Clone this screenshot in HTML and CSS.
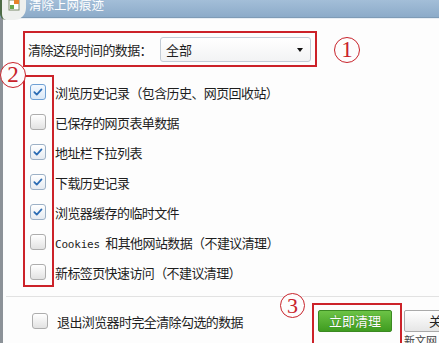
FILE: index.html
```html
<!DOCTYPE html>
<html lang="zh-CN">
<head>
<meta charset="utf-8">
<title>清除上网痕迹</title>
<link rel="stylesheet" href="styles.css">
</head>
<body>
<div class="window">
  <div class="titlebar">
    <span class="app-icon">
      <svg width="12" height="11" viewBox="0 0 12 11"><rect x="1" y="0" width="10" height="10" fill="#fff" stroke="#7a8a6a" stroke-width="1"/><rect x="6" y="0" width="5" height="4" fill="#e8822a"/><rect x="2" y="5" width="4" height="4" fill="#6aa84f"/></svg>
    </span>
    <span class="title">清除上网痕迹</span>
  </div>
  <div class="frame">
    <div class="edge"></div>
    <div class="content">
      <div class="range-row">
        <span class="range-label">清除这段时间的数据：</span>
        <div class="select"><span class="select-value">全部</span><span class="caret"></span></div>
      </div>
      <ul class="options">
        <li class="option"><span class="check checked hover"><svg viewBox="0 0 16 16"><path d="M3.8 8.2 L6.6 11 L12 5"/></svg></span><span class="label">浏览历史记录（包含历史、网页回收站）</span></li>
        <li class="option"><span class="check"></span><span class="label">已保存的网页表单数据</span></li>
        <li class="option"><span class="check checked"><svg viewBox="0 0 16 16"><path d="M3.8 8.2 L6.6 11 L12 5"/></svg></span><span class="label">地址栏下拉列表</span></li>
        <li class="option"><span class="check checked"><svg viewBox="0 0 16 16"><path d="M3.8 8.2 L6.6 11 L12 5"/></svg></span><span class="label">下载历史记录</span></li>
        <li class="option"><span class="check checked"><svg viewBox="0 0 16 16"><path d="M3.8 8.2 L6.6 11 L12 5"/></svg></span><span class="label">浏览器缓存的临时文件</span></li>
        <li class="option"><span class="check"></span><span class="label"><span class="latin">Cookies</span> 和其他网站数据（不建议清理）</span></li>
        <li class="option"><span class="check"></span><span class="label">新标签页快速访问（不建议清理）</span></li>
      </ul>
      <div class="footer">
        <div class="exit"><span class="check"></span><span class="label">退出浏览器时完全清除勾选的数据</span></div>
        <div class="actions">
          <button class="btn primary">立即清理</button>
          <button class="btn secondary">关闭</button>
        </div>
      </div>
    </div>
  </div>

  <div class="mark-box box-list"></div>
  <div class="mark-box box-action"></div>
  <span class="num num-1">1</span>
  <span class="num num-2">2</span>
  <span class="num num-3">3</span>
  <span class="watermark">新文网</span>
</div>
</body>
</html>
```
FILE: styles.css
```css
* { box-sizing: border-box; }
html, body { margin: 0; padding: 0; }
body {
  width: 439px;
  height: 343px;
  overflow: hidden;
  background: #fdfdfd;
  font-family: "Noto Sans CJK SC", "Liberation Sans", sans-serif;
  font-size: 13px;
  color: #1e1e1e;
}
.window {
  position: relative;
  width: 439px;
  height: 343px;
  overflow: hidden;
  background: #fdfdfd;
}
.titlebar {
  height: 18px;
  display: flex;
  align-items: flex-start;
  background: linear-gradient(#a3bed8, #8cabc9);
  border-bottom: 1px solid #7e9bb6;
  box-shadow: 0 1px 0 #e8eef4;
}
.app-icon {
  width: 26px;
  height: 20px;
  display: flex;
  justify-content: center;
  align-items: flex-start;
  background: #eef0ee;
  border-radius: 0 0 12px 6px;
  border-left: 2px solid #4d6b45;
  position: relative;
  z-index: 1;
}
.title {
  margin-left: 3px;
  margin-top: -3px;
  color: #fff;
  font-size: 12.5px;
  line-height: 16px;
}
.frame {
  display: flex;
  height: 325px;
}
.edge {
  width: 3px;
  background: #8c9298;
  flex: none;
}
.content {
  flex: 1;
  display: flex;
  flex-direction: column;
}
.range-row {
  margin: 13px 0 0 20px;
  width: 294px;
  height: 36px;
  border: 2px solid #cc2229;
  display: flex;
  align-items: center;
  padding: 0 4px 0 3px;
}
.range-label {
  font-size: 13px;
  letter-spacing: -0.6px;
}
.select {
  margin-left: auto;
  width: 151px;
  height: 25px;
  border: 1px solid #c3ccd6;
  border-radius: 3px;
  background: linear-gradient(#ffffff, #f2f3f4);
  display: flex;
  align-items: center;
  padding: 0 7px 0 5px;
}
.select-value { font-size: 13px; }
.caret {
  margin-left: auto;
  width: 0;
  height: 0;
  border-left: 3.5px solid transparent;
  border-right: 3.5px solid transparent;
  border-top: 4px solid #111;
  margin-top: 2px;
}
.options {
  list-style: none;
  margin: 10px 0 0 0;
  padding: 0 0 0 27px;
}
.option {
  height: 30px;
  display: flex;
  align-items: center;
  gap: 9px;
}
.label {
  font-size: 13px;
  letter-spacing: -0.6px;
  white-space: nowrap;
}
.latin {
  font-family: "DejaVu Sans Mono", "Liberation Mono", monospace;
  font-size: 11px;
  letter-spacing: -0.2px;
  margin-right: 3px;
}
.check {
  width: 16px;
  height: 16px;
  flex: none;
  border: 1px solid #adadad;
  border-radius: 3px;
  background: linear-gradient(#ffffff, #e2e2e2);
  display: flex;
  align-items: center;
  justify-content: center;
}
.check.checked {
  border-color: #9db1c6;
  background: linear-gradient(#ffffff, #e6ebf1);
}
.check.hover {
  border-color: #6fa0d4;
  background: linear-gradient(#f4f9ff, #dbe8f6);
}
.check svg {
  width: 16px;
  height: 16px;
}
.check svg path {
  fill: none;
  stroke: #2c6cb4;
  stroke-width: 2;
  stroke-linecap: round;
  stroke-linejoin: round;
}
.footer {
  margin: 9px 0 0 3px;
  border-top: 1px solid #e2e2e2;
  display: flex;
  align-items: center;
  padding: 13px 0 0 26px;
}
.exit {
  width: 286px;
  flex: none;
  display: flex;
  align-items: center;
  gap: 9px;
}
.actions {
  display: flex;
  gap: 12px;
  flex: none;
}
.btn {
  width: 74px;
  height: 22px;
  font-family: "Noto Sans CJK SC", sans-serif;
  font-size: 13px;
  line-height: 20px;
  padding: 0;
  border-radius: 2px;
}
.primary {
  color: #fff;
  border: 1px solid #3b8a22;
  background: linear-gradient(#6cc346, #3f9c20);
  text-shadow: 0 0 1px #2e6e18;
}
.secondary {
  color: #222;
  border: 1px solid #aaaaaa;
  background: linear-gradient(#ffffff, #e6e6e6);
  text-align: left;
  padding-left: 24px;
}

/* annotations */
.mark-box {
  position: absolute;
  border: 2px solid #cc2229;
}
.box-list {
  left: 23px;
  top: 75px;
  width: 31px;
  height: 212px;
}
.box-action {
  left: 312px;
  top: 303px;
  width: 90px;
  height: 50px;
}
.num {
  position: absolute;
  width: 26px;
  height: 26px;
  border: 1.5px solid #c8232b;
  border-radius: 50%;
  background: #fdfdfd;
  color: #c8232b;
  font-family: "Liberation Serif", serif;
  font-size: 23px;
  line-height: 24px;
  text-align: center;
}
.num-1 { left: 334px; top: 37px; }
.num-2 { left: 0px; top: 62px; }
.num-3 { left: 280px; top: 293px; width: 25px; height: 25px; line-height: 23px; font-size: 22px; }
.watermark {
  position: absolute;
  left: 403px;
  top: 334px;
  font-size: 11px;
  line-height: 12px;
  color: #444;
  background: #fdfdfd;
  padding: 0 1px;
}
```
